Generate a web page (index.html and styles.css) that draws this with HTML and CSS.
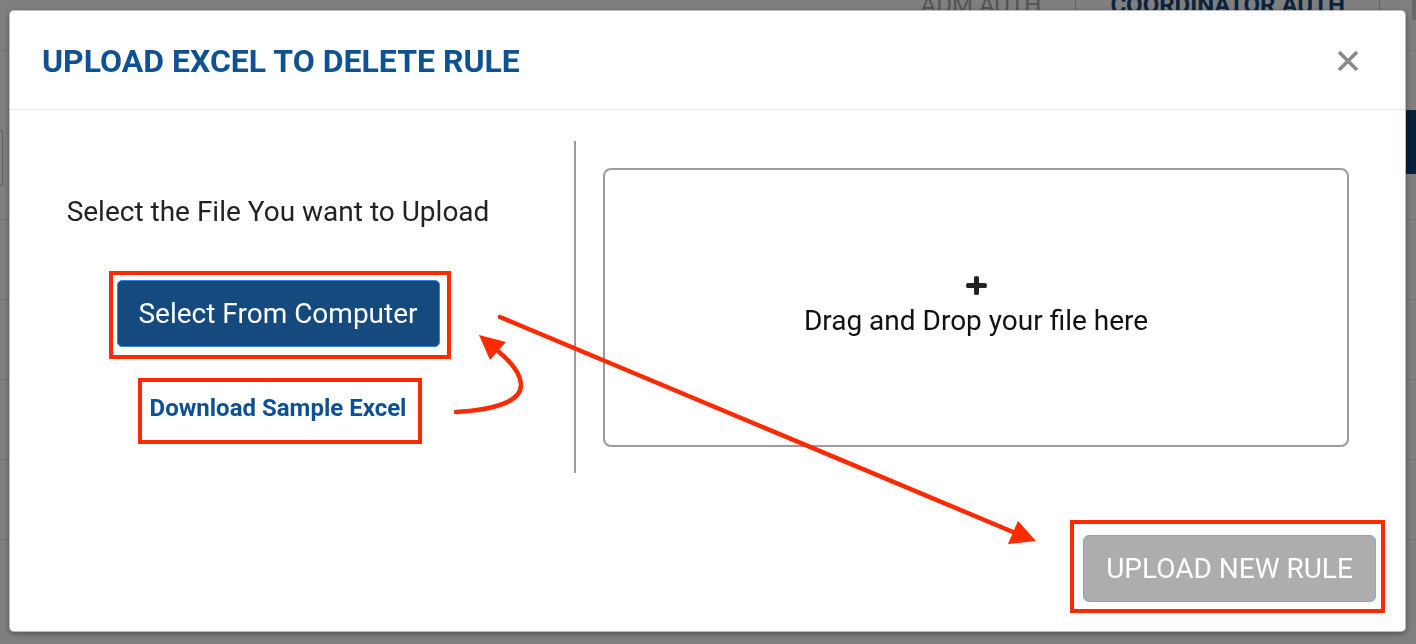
FILE: index.html
```html
<!DOCTYPE html>
<html lang="en">
<head>
<meta charset="utf-8">
<title>Upload Excel to Delete Rule</title>
<link rel="stylesheet" href="styles.css">
</head>
<body>
  <div class="page">
    <nav class="topnav">
      <span class="nav-item">ADM AUTH</span>
      <span class="nav-sep"></span>
      <span class="nav-item active">COORDINATOR AUTH</span>
      <span class="nav-sep"></span>
      <span class="nav-bar"></span>
    </nav>
    <div class="toolbar">
      <div class="filter"></div>
      <button class="page-btn">RULE</button>
    </div>
    <div class="rows">
      <div class="row"></div>
      <div class="row"></div>
      <div class="row"></div>
      <div class="row"></div>
      <div class="row"></div>
    </div>
  </div>

  <div class="backdrop"></div>

  <div class="modal">
    <div class="modal-header">
      <h4 class="modal-title">UPLOAD EXCEL TO DELETE RULE</h4>
      <button class="close" aria-label="Close">
        <svg width="22" height="22" viewBox="0 0 22 22"><path d="M2 2 L20 20 M20 2 L2 20" stroke="#8a8a8a" stroke-width="3.6" stroke-linecap="butt"/></svg>
      </button>
    </div>
    <div class="modal-body">
      <div class="left-col">
        <p class="hint">Select the File You want to Upload</p>
        <button class="btn-select">Select From Computer</button>
        <a class="sample-link" href="#">Download Sample Excel</a>
      </div>
      <div class="divider"></div>
      <div class="dropzone">
        <svg class="plus" width="21" height="19" viewBox="0 0 21 19"><path d="M8 1.5 Q8 0 10.5 0 Q13 0 13 1.5 V7 H19.5 Q21 7 21 9.5 Q21 12 19.5 12 H13 V17.5 Q13 19 10.5 19 Q8 19 8 17.5 V12 H1.5 Q0 12 0 9.5 Q0 7 1.5 7 H8 Z" fill="#222"/></svg>
        <span class="drop-text">Drag and Drop your file here</span>
      </div>
    </div>
    <div class="modal-footer">
      <button class="btn-upload">UPLOAD NEW RULE</button>
    </div>
  </div>

  <svg class="annotations" width="1416" height="644" viewBox="0 0 1416 644">
    <g fill="none" stroke="#fe2a00" stroke-width="4">
      <rect x="111" y="273" width="338" height="84"/>
      <rect x="140" y="380" width="280" height="62"/>
      <rect x="1072" y="522" width="311" height="89"/>
    </g>
    <g fill="none" stroke="#fe2a00" stroke-width="4.5" stroke-linecap="round">
      <path d="M500 317 L1013 532"/>
      <path d="M456 412 C 490 410, 522 403, 521 384 C 520 372, 511 362, 499 352"/>
    </g>
    <g fill="#fe2a00">
      <polygon points="1036,541 1008,544 1018,521"/>
      <polygon points="479,335 490,360 506,342"/>
    </g>
  </svg>
</body>
</html>
```

FILE: styles.css
```css
* { box-sizing: border-box; }

html, body {
  margin: 0;
  padding: 0;
  width: 1416px;
  height: 644px;
  overflow: hidden;
  font-family: Roboto, "Liberation Sans", Arial, sans-serif;
  background: #ffffff;
}

/* ---------- background page ---------- */
.page {
  width: 1416px;
  height: 644px;
  background: #ffffff;
}

.topnav {
  display: flex;
  align-items: center;
  justify-content: flex-end;
  height: 30px;
  margin-top: -10px;
  font-size: 24px;
  line-height: 1;
}

.nav-item {
  color: #a8a8a8;
  padding: 0 34px;
}

.nav-item.active {
  color: #16477c;
  font-weight: 700;
  padding: 0 34px;
}

.nav-sep {
  width: 1px;
  height: 12px;
  background: #c4c4c4;
}

.nav-bar {
  width: 4px;
  height: 30px;
  margin-left: 32px;
  background: #d0d0d0;
}

.toolbar {
  display: flex;
  justify-content: space-between;
  align-items: flex-start;
  height: 169px;
  padding-top: 59px;
  border-top: 1px solid #e6e6e6;
  margin-top: 30px;
}

.filter {
  width: 3px;
  height: 56px;
  margin-top: 20px;
  border: 1px solid #bbbbbb;
  border-left: none;
  border-radius: 0 4px 4px 0;
}

.page-btn {
  height: 64px;
  width: 80px;
  margin-right: -70px;
  padding: 0 0 0 12px;
  text-align: left;
  border: none;
  background: #0d3f78;
  color: #ffffff;
  font-family: Roboto, sans-serif;
  font-weight: 700;
  font-size: 22px;
}

.rows {
  display: flex;
  flex-direction: column;
}

.row {
  height: 80px;
  border-top: 1px solid #e3e3e3;
}

.backdrop {
  position: fixed;
  inset: 0;
  background: rgba(0, 0, 0, 0.5);
}

/* ---------- modal ---------- */
.modal {
  position: fixed;
  left: 9px;
  top: 10px;
  width: 1397px;
  height: 622px;
  display: flex;
  flex-direction: column;
  background: #ffffff;
  border: 1px solid rgba(0, 0, 0, 0.25);
  border-radius: 5px;
  box-shadow: 0 2px 6px rgba(0, 0, 0, 0.35);
}

.modal-header {
  display: flex;
  align-items: center;
  justify-content: space-between;
  height: 99px;
  padding: 0 46px 0 32px;
  border-bottom: 1px solid #e5e5e5;
  flex: none;
}

.modal-title {
  margin: 0;
  font-size: 32px;
  font-weight: 700;
  color: #0f5293;
  line-height: 1;
  padding-top: 1px;
}

.close {
  width: 22px;
  height: 22px;
  padding: 0;
  margin-top: 2px;
  border: none;
  background: none;
  display: flex;
}

.modal-body {
  display: flex;
  height: 424px;
  flex: none;
}

.left-col {
  width: 536px;
  display: flex;
  flex-direction: column;
  align-items: center;
  padding-top: 85px;
}

.hint {
  margin: 0;
  font-size: 28px;
  line-height: 34px;
  color: #222222;
}

.btn-select {
  margin-top: 51px;
  width: 323px;
  height: 67px;
  border: 1px solid #2c86ea;
  border-radius: 5px;
  background: #154a7e;
  color: #ffffff;
  font-family: Roboto, sans-serif;
  font-size: 28px;
  padding: 0;
}

.sample-link {
  margin-top: 47px;
  font-size: 24px;
  font-weight: 700;
  line-height: 28px;
  color: #0f5190;
  text-decoration: none;
}

.divider {
  width: 2px;
  margin-left: 28px;
  margin-top: 31px;
  height: 332px;
  background: #9a9a9a;
}

.dropzone {
  width: 746px;
  height: 279px;
  margin-left: 27px;
  margin-top: 58px;
  border: 2px solid #9b9b9b;
  border-radius: 8px;
  display: flex;
  flex-direction: column;
  align-items: center;
  justify-content: center;
  gap: 9px;
}

.plus {
  display: block;
  margin-top: -2px;
}

.drop-text {
  font-size: 28px;
  line-height: 34px;
  color: #111111;
}

.modal-footer {
  flex: 1;
  display: flex;
  justify-content: flex-end;
  align-items: flex-end;
  padding: 0 29px 29px 0;
}

.btn-upload {
  width: 293px;
  height: 67px;
  border: 1px solid #74a8f3;
  border-radius: 6px;
  background: #adadad;
  color: #ffffff;
  font-family: Roboto, sans-serif;
  font-size: 28px;
  padding: 0;
}

/* ---------- annotation overlay ---------- */
.annotations {
  position: absolute;
  left: 0;
  top: 0;
  pointer-events: none;
}
```
